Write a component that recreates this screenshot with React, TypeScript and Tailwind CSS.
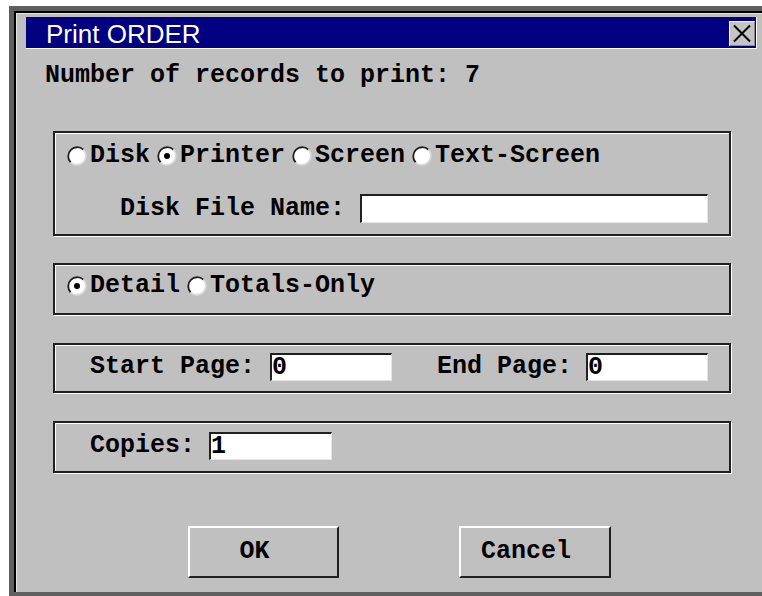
import React from "react";

const mono =
  "font-['Liberation_Mono',monospace] font-bold text-[25px] leading-[28px] text-black";

const groove =
  "border-2 border-[#202020] shadow-[inset_1px_1px_0_#ffffff,1px_1px_0_#ffffff]";

function Radio({ checked }: { checked?: boolean }) {
  return (
    <svg width="20" height="20" viewBox="0 0 20 20" className="shrink-0 block">
      <circle cx="10" cy="10" r="9" fill="#ffffff" />
      <path d="M3.64 16.36 A9 9 0 0 1 16.36 3.64" fill="none" stroke="#202020" strokeWidth="1.8" />
      <path d="M16.36 3.64 A9 9 0 0 1 3.64 16.36" fill="none" stroke="#dcdcdc" strokeWidth="1.8" />
      {checked && <circle cx="10" cy="10" r="3" fill="#000000" />}
    </svg>
  );
}

function RadioItem({ label, checked }: { label: string; checked?: boolean }) {
  return (
    <div className="flex items-center mr-[7px]">
      <Radio checked={checked} />
      <span className="ml-[3px] whitespace-pre">{label}</span>
    </div>
  );
}

function Field({ w, h, value }: { w: string; h: string; value?: string }) {
  return (
    <div
      className={`${w} ${h} bg-white border-t-2 border-l-2 border-b border-r border-t-[#202020] border-l-[#202020] border-b-[#e6e6e6] border-r-[#e6e6e6] leading-[25px] whitespace-pre`}
    >
      {value ?? ""}
    </div>
  );
}

function Button({ label, w }: { label: string; w: string }) {
  return (
    <div
      className={`${w} h-[52px] flex items-center justify-center pr-[18px] border-2 border-t-white border-l-white border-b-[#202020] border-r-[#202020] bg-[#c0c0c0]`}
    >
      <span className="whitespace-pre">{label}</span>
    </div>
  );
}

export default function App() {
  return (
    <div className="w-[762px] h-[596px] overflow-hidden bg-white pl-[9px] pt-[6px]">
      {/* window frame */}
      <div className="w-[790px] h-[620px] bg-[#606060] pt-[5px] pl-[5px]">
        <div className="h-[581px] border-t-2 border-l-2 border-black">
          <div className={`h-full border-t border-l border-[#e4e4e4] bg-[#c0c0c0] flex flex-col ${mono}`}>
            {/* title bar */}
            <div className="ml-[9px] mt-[3px] w-[731px] h-[32px] shrink-0 flex bg-[#000080] border-b border-r border-white">
              <span className="pl-[20px] pt-[3px] font-['Liberation_Sans',sans-serif] font-normal text-[26px] leading-[29px] text-white">
                Print ORDER
              </span>
              <div className="ml-auto mr-[1px] mt-[4px] w-[26px] h-[25px] bg-[#c4c4c4] border border-t-[#f4f4f4] border-l-[#f4f4f4] border-b-[#8a8a8a] border-r-[#8a8a8a] flex items-center justify-center">
                <svg width="20" height="19" viewBox="0 0 20 19">
                  <path d="M2 1.5 L18 17.5 M18 1.5 L2 17.5" stroke="#000" strokeWidth="2" />
                </svg>
              </div>
            </div>

            <div className="mt-[13px] pl-[28px] whitespace-pre">Number of records to print: 7</div>

            {/* output target */}
            <div className={`mt-[41px] ml-[36px] w-[678px] h-[105px] shrink-0 ${groove} pt-[9px] pl-[12px]`}>
              <div className="flex">
                <RadioItem label="Disk" />
                <RadioItem label="Printer" checked />
                <RadioItem label="Screen" />
                <RadioItem label="Text-Screen" />
              </div>
              <div className="mt-[24px] pl-[53px] flex items-center">
                <span className="whitespace-pre">Disk File Name:</span>
                <div className="ml-[15px]">
                  <Field w="w-[348px]" h="h-[29px]" />
                </div>
              </div>
            </div>

            {/* report type */}
            <div className={`mt-[27px] ml-[36px] w-[678px] h-[52px] shrink-0 ${groove} pt-[7px] pl-[12px]`}>
              <div className="flex">
                <RadioItem label="Detail" checked />
                <RadioItem label="Totals-Only" />
              </div>
            </div>

            {/* page range */}
            <div className={`mt-[28px] ml-[36px] w-[678px] h-[50px] shrink-0 ${groove} pt-[8px] pl-[35px]`}>
              <div className="flex items-center">
                <span className="whitespace-pre">Start Page:</span>
                <div className="ml-[15px]">
                  <Field w="w-[122px]" h="h-[28px]" value="0" />
                </div>
                <span className="ml-[45px] whitespace-pre">End Page:</span>
                <div className="ml-[14px]">
                  <Field w="w-[122px]" h="h-[28px]" value="0" />
                </div>
              </div>
            </div>

            {/* copies */}
            <div className={`mt-[28px] ml-[36px] w-[678px] h-[52px] shrink-0 ${groove} pt-[9px] pl-[35px]`}>
              <div className="flex items-center">
                <span className="whitespace-pre">Copies:</span>
                <div className="ml-[14px]">
                  <Field w="w-[123px]" h="h-[28px]" value="1" />
                </div>
              </div>
            </div>

            {/* actions */}
            <div className="mt-[53px] ml-[171px] flex">
              <Button label="OK" w="w-[151px]" />
              <div className="ml-[120px]">
                <Button label="Cancel" w="w-[152px]" />
              </div>
            </div>
          </div>
        </div>
      </div>
    </div>
  );
}
